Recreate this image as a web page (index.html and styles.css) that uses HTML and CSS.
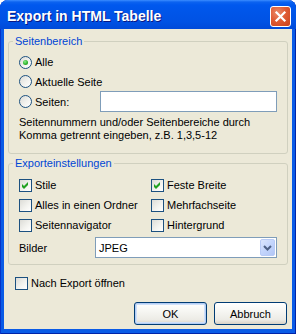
FILE: index.html
```html
<!DOCTYPE html>
<html>
<head>
<meta charset="utf-8">
<link rel="stylesheet" href="styles.css">
</head>
<body>
<div class="window">
  <div class="titlebar">
    <span class="title">Export in HTML Tabelle</span>
    <span class="close"><svg width="19" height="19" viewBox="0 0 19 19"><path d="M5.5 5.5 L13.5 13.5 M13.5 5.5 L5.5 13.5" stroke="#fff" stroke-width="2.2" stroke-linecap="square"/></svg></span>
  </div>
  <div class="client">
    <fieldset class="group g1">
      <legend>Seitenbereich</legend>
      <div class="row"><span class="radio on"></span><span class="lbl">Alle</span></div>
      <div class="row short"><span class="radio"></span><span class="lbl">Aktuelle Seite</span></div>
      <div class="row tall"><span class="radio"></span><span class="lbl">Seiten:</span><span class="textbox"></span></div>
      <p class="hint">Seitennummern und/oder Seitenbereiche durch<br>Komma getrennt eingeben, z.B. 1,3,5-12</p>
    </fieldset>
    <fieldset class="group g2">
      <legend>Exporteinstellungen</legend>
      <div class="grid">
        <div class="row"><span class="check on"><svg width="11" height="11" viewBox="0 0 11 11"><polygon points="2,4 4,6 8,2 8,5 4,9 2,7" fill="#21a121"/></svg></span><span class="lbl">Stile</span></div>
        <div class="row"><span class="check on"><svg width="11" height="11" viewBox="0 0 11 11"><polygon points="2,4 4,6 8,2 8,5 4,9 2,7" fill="#21a121"/></svg></span><span class="lbl">Feste Breite</span></div>
        <div class="row"><span class="check"></span><span class="lbl">Alles in einen Ordner</span></div>
        <div class="row"><span class="check"></span><span class="lbl">Mehrfachseite</span></div>
        <div class="row"><span class="check"></span><span class="lbl">Seitennavigator</span></div>
        <div class="row"><span class="check"></span><span class="lbl">Hintergrund</span></div>
      </div>
      <div class="row tall bilder"><span class="lbl plain">Bilder</span><span class="select"><span class="val">JPEG</span><span class="dd"><svg width="9" height="6" viewBox="0 0 9 6"><path d="M1 1 L4.5 4.5 L8 1" stroke="#4d6185" stroke-width="2" fill="none"/></svg></span></span></div>
    </fieldset>
    <div class="row nach"><span class="check"></span><span class="lbl">Nach Export öffnen</span></div>
    <div class="buttons"><span class="btn default">OK</span><span class="btn">Abbruch</span></div>
  </div>
</div>
</body>
</html>
```

FILE: styles.css
```css
html, body {
  margin: 0;
  padding: 0;
  background: #ffffff;
}
.window {
  width: 296px;
  height: 334px;
  display: flex;
  flex-direction: column;
  background: #0a5be6;
  border-radius: 8px 8px 0 0;
  box-shadow: inset 1px 0 #0733c8, inset -1px 0 #0023a8, inset 0 -1px #0023a8;
  font-family: "Liberation Sans", Arial, sans-serif;
  font-size: 11px;
  color: #000;
}
.titlebar {
  height: 29px;
  flex: none;
  display: flex;
  align-items: center;
  padding: 0 5px 0 7px;
  border-radius: 8px 8px 0 0;
  background: linear-gradient(#3b8dff 0, #0c63f0 2px, #0058ee 5px, #0055e8 45%, #0052e4 75%, #004ad9 100%);
}
.title {
  flex: 1;
  color: #fff;
  font-weight: bold;
  font-size: 14px;
  padding-top: 2px;
  text-shadow: 1px 1px #0a1883;
}
.close {
  width: 19px;
  height: 19px;
  border: 1px solid #fff;
  border-radius: 3px;
  margin-top: 3px;
  background: radial-gradient(circle at 35% 30%, #ea8a6a 0, #e05c35 45%, #c8401a 100%);
  display: flex;
}
.client {
  flex: 1;
  margin: 0 4px 5px 4px;
  background: #ece9d8;
  padding: 5px 4px 0 4px;
  display: flex;
  flex-direction: column;
}
.group {
  margin: 0;
  padding: 4px 0 11px 0;
  border: 1px solid #d0d0bf;
  border-radius: 3px;
  min-inline-size: 0;
}
.group legend {
  margin-left: 4px;
  padding: 0 2px;
  line-height: 14px;
  color: #0046d5;
}
.g2 {
  margin-top: 2px;
  padding: 5px 0 6px 0;
}
.row {
  height: 20px;
  display: flex;
  align-items: center;
  padding: 0 10px;
  white-space: nowrap;
}
.row.short { height: 19px; }
.row.tall { height: 21px; }
.lbl { margin-left: 3px; }
.lbl.plain { margin-left: 0; }
.radio {
  width: 11px;
  height: 11px;
  border: 1px solid #1c5180;
  border-radius: 50%;
  background: linear-gradient(135deg, #dcdcd7 0, #f4f4f0 60%, #ffffff 100%);
  display: flex;
  align-items: center;
  justify-content: center;
  flex: none;
}
.radio.on::after {
  content: "";
  width: 5px;
  height: 5px;
  border-radius: 50%;
  background: radial-gradient(circle at 40% 35%, #8cf08a 0, #2fb52c 55%, #1c8f1a 100%);
}
.check {
  width: 11px;
  height: 11px;
  border: 1px solid #1c5180;
  background: linear-gradient(135deg, #dcdcd7 0, #f4f4f0 60%, #ffffff 100%);
  display: flex;
  flex: none;
}
.textbox {
  margin-left: auto;
  width: 175px;
  height: 19px;
  border: 1px solid #7f9db9;
  background: #fff;
}
.hint {
  margin: 4px 0 0 0;
  padding: 0 10px;
  line-height: 13px;
}
.grid {
  display: grid;
  grid-template-columns: 142px 1fr;
}
.grid .row:nth-child(even) { padding-left: 0; }
.bilder { margin-top: 2px; }
.select {
  margin-left: auto;
  width: 178px;
  height: 17px;
  border: 1px solid #7f9db9;
  background: #fff;
  padding: 1px;
  display: flex;
  align-items: center;
}
.val { flex: 1; padding-left: 2px; }
.dd {
  width: 15px;
  height: 17px;
  box-sizing: border-box;
  border: 1px solid #b8cbf6;
  border-radius: 2px;
  background: linear-gradient(135deg, #dbe6fd 0, #c3d5fc 50%, #b2c6f5 100%);
  display: flex;
  align-items: center;
  justify-content: center;
}
.nach {
  margin-top: 8px;
  padding-left: 7px;
}
.buttons {
  margin-top: 9px;
  display: flex;
  justify-content: flex-end;
  gap: 7px;
  padding-right: 1px;
}
.btn {
  width: 71px;
  height: 21px;
  border: 1px solid #003c74;
  border-radius: 3px;
  background: linear-gradient(#ffffff 0, #f6f6f2 40%, #ecebe5 80%, #d8d2c6 100%);
  display: flex;
  align-items: center;
  justify-content: center;
}
.btn.default {
  box-shadow: inset 0 0 0 1px #b3cdf4, inset 0 0 0 2px #cfe0f9;
}
```
